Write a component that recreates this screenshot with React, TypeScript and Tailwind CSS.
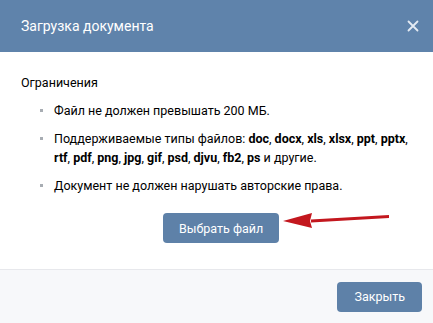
import type { JSX } from 'react'

const types: string[] = ['doc', 'docx', 'xls', 'xlsx', 'ppt', 'pptx', 'rtf', 'pdf', 'png', 'jpg', 'gif', 'psd', 'djvu', 'fb2', 'ps']

function Dot(): JSX.Element {
  return <span className="mt-[8px] mr-[11px] ml-[19px] h-[3px] w-[3px] shrink-0 bg-[#a8adb3]" />
}

export default function App(): JSX.Element {
  return (
    <div
      className="flex h-[323px] w-[433px] flex-col bg-white text-[12.5px] leading-[19px] text-black"
      style={{ fontFamily: 'Roboto, "Open Sans", "Liberation Sans", sans-serif' }}
    >
      <div className="flex h-[52px] shrink-0 items-center justify-between bg-[#5f83ab] pr-[14px] pl-[21px]">
        <span className="text-[14px] text-white">Загрузка документа</span>
        <svg width="12" height="12" viewBox="0 0 12 12" className="text-[#e4ebf3]">
          <path d="M1.5 1.5 L10.5 10.5 M10.5 1.5 L1.5 10.5" stroke="currentColor" strokeWidth="1.8" strokeLinecap="round" />
        </svg>
      </div>

      <div className="flex-1 px-[21px] pt-[21px]">
        <div>Ограничения</div>
        <ul className="mt-[9px] flex flex-col gap-[9px]">
          <li className="flex">
            <Dot />
            <span>Файл не должен превышать 200 МБ.</span>
          </li>
          <li className="flex">
            <Dot />
            <span className="whitespace-nowrap">
              Поддерживаемые типы файлов:{' '}
              {types.map((t, i) => (
                <span key={t}>
                  <b className="font-bold">{t}</b>
                  {i < types.length - 1 && t !== 'pptx' ? ', ' : ''}
                  {t === 'pptx' ? (
                    <>
                      ,<br />
                    </>
                  ) : null}
                </span>
              ))}{' '}
              и другие.
            </span>
          </li>
          <li className="flex">
            <Dot />
            <span>Документ не должен нарушать авторские права.</span>
          </li>
        </ul>
        <div className="relative mt-[18px] ml-[142px] w-fit">
          <button className="h-[30px] rounded-[4px] bg-[#5e81a8] px-[16px] text-[12.5px] text-white">
            Выбрать файл
          </button>
          <svg
            width="112"
            height="20"
            viewBox="0 0 112 20"
            className="pointer-events-none absolute top-[-1px] left-[119px]"
          >
            <path d="M29 7.5 L107 3 L107 6 L29 10.5 Z" fill="#c3171e" />
            <path d="M1 9 L30 1 L28 9 L30 16 Z" fill="#c3171e" />
          </svg>
        </div>
      </div>

      <div className="flex h-[54px] shrink-0 items-center justify-end border-t border-[#e7e8ec] bg-[#f7f8fa] pr-[11px]">
        <button className="h-[30px] rounded-[4px] bg-[#5e81a8] px-[17px] text-[12.5px] text-white">Закрыть</button>
      </div>
    </div>
  )
}
